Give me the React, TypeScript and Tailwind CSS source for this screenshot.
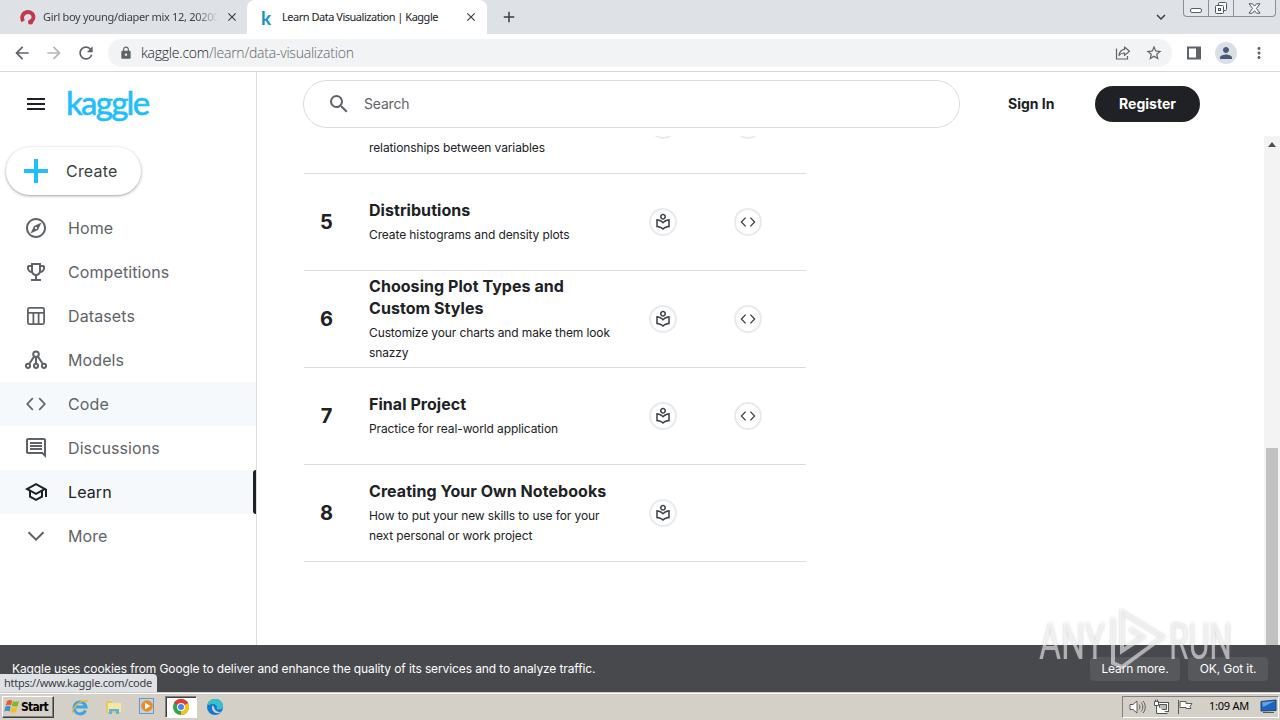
import type { ReactNode } from "react";
import clsx from "clsx";
import {
    MdAdd,
    MdArrowBack,
    MdArrowForward,
    MdClose,
    MdExpandMore,
    MdLock,
    MdMenu,
    MdMoreVert,
    MdOutlineEmojiEvents,
    MdOutlineExplore,
    MdOutlineInsertComment,
    MdOutlineLocalLibrary,
    MdOutlineSchool,
    MdPerson,
    MdRefresh,
    MdSearch,
    MdStarBorder,
} from "react-icons/md";

interface NavItemProps {
    icon: ReactNode;
    label: string;
    hovered?: boolean;
    active?: boolean;
}

interface LessonProps {
    number?: number;
    title?: string;
    description: string;
    hasExercise?: boolean;
    className?: string;
}

const CodeIcon = () => (
    <svg width="1em" height="1em" viewBox="0 0 24 24" fill="none" stroke="currentColor" strokeWidth="1.7">
        <path d="M8.800 6.200L3.200 12l5.600 5.800M15.200 6.200l5.600 5.800-5.600 5.800" />
    </svg>
)

const ChevronIcon = () => (
    <svg width="24" height="24" viewBox="0 0 24 24" fill="none" stroke="currentColor" strokeWidth="2">
        <path d="M4.500 8.300l7.500 7.400 7.500-7.400" />
    </svg>
)

const DatasetsIcon = () => (
    <svg width="24" height="24" viewBox="0 0 24 24" fill="none" stroke="currentColor" strokeWidth="1.8">
        <rect x="3.9" y="3.9" width="16.2" height="16.2" rx="1.5" />
        <path d="M4 8.9h16M9.400 9v11M14.600 9v11" />
    </svg>
)

const ModelsIcon = () => (
    <svg width="24" height="24" viewBox="0 0 24 24" fill="none" stroke="currentColor" strokeWidth="2">
        <circle cx="12" cy="6.200" r="2.800" />
        <circle cx="4" cy="17.800" r="2.100" />
        <circle cx="12" cy="17.800" r="2.100" />
        <circle cx="20" cy="17.800" r="2.100" />
        <path d="M12 9v6.500M10.300 8.400l-5 7.300M13.700 8.400l5 7.300" />
    </svg>
)

const ShareIcon = () => (
    <svg width="18" height="18" viewBox="0 0 18 18" fill="none" stroke="#5f6368" strokeWidth="1.2">
        <path d="M2.500 4.500v10.500h11v-3" />
        <path d="M10.500 3l5 4.200-5 4.200V9c-2.700-.2-4.300.8-5.500 2.500.3-3.300 2-5.700 5.500-6.100z" strokeLinejoin="round" />
    </svg>
)

const WindowButtons = () => (
    <div className="flex h-[17px] w-[93px] rounded-b-[4px] border border-t-0 border-[#8b8f98] bg-[#e3e6eb]">
        <div className="flex w-[25px] items-end justify-center border-r border-[#8b8f98] pb-[3px]">
            <div className="h-[5px] w-3 rounded-[2px] border border-[#5a5e66] bg-white"></div>
        </div>
        <div className="flex w-[25px] items-center justify-center border-r border-[#8b8f98]">
            <svg width="14" height="14" viewBox="0 0 14 14" fill="#fff" stroke="#50545c">
                <rect x="4.500" y="1.500" width="8" height="8" rx="1" />
                <rect x="1.500" y="4.500" width="8" height="8" rx="1" />
                <rect x="4.500" y="7.500" width="2" height="2" />
            </svg>
        </div>
        <div className="flex flex-1 items-center justify-center">
            <svg width="13" height="11" viewBox="0 0 13 11" fill="#fff" stroke="#50545c" strokeLinejoin="round">
                <path d="M1 .8h3.500l2 2.400 2-2.400H12L8.400 5.400 12 10.200H8.500l-2-2.500-2 2.500H1l3.600-4.800z" />
            </svg>
        </div>
    </div>
)

const TabStrip = () => (
    <div className="flex h-[34px] bg-[#dee1e6] text-[#3c4043]">
        <div className="flex w-[247px] items-center pl-5">
            <svg width="16" height="16" viewBox="0 0 16 16" fill="none">
                <path d="M3.200 12.200C.9 8.500 2.500 3.500 7.500 3c4.500-.3 6.700 3.500 5.700 6.500-.6 2-2 3-3.700 3.500" stroke="#c03a4c" strokeWidth="3.800" />
                <circle cx="10.500" cy="13" r="2.500" fill="#c03a4c" />
            </svg>
            <span className="ml-[7px] w-[175px] overflow-hidden whitespace-nowrap font-['Noto_Sans',sans-serif] text-[11px] tracking-[-0.32px] [mask-image:linear-gradient(to_right,black_87%,transparent)]">
                Girl boy young/diaper mix 12, 20200
            </span>
            <MdClose className="ml-[7px] text-[14px]" stroke="currentColor" />
        </div>
        <div className="flex w-[240px] items-center rounded-t-lg bg-white pl-[11px]">
            <span className="w-4 text-center font-['Lato',sans-serif] text-[19px] leading-none font-bold text-[#1593c4]">k</span>
            <span className="ml-2 w-[178px] whitespace-nowrap font-['Noto_Sans',sans-serif] text-[11px] tracking-[-0.48px] text-[#202124]">
                Learn Data Visualization | Kaggle
            </span>
            <MdClose className="ml-[4px] text-[14px]" stroke="currentColor" />
        </div>
        <MdAdd className="mt-2 ml-[13px] text-[18px]" />
        <MdExpandMore className="mt-[8px] ml-[634px] text-[18px]" />
        <div className="ml-[13px]">
            <WindowButtons />
        </div>
    </div>
)

const Toolbar = () => (
    <div className="flex h-[38px] items-center border-b border-[#d5d7da] bg-white text-[#5f6368]">
        <MdArrowBack className="ml-3 text-[20px]" />
        <MdArrowForward className="ml-3 text-[20px] text-[#b4b6b9]" />
        <MdRefresh className="ml-3 text-[20px]" />
        <div className="ml-[12px] flex h-7 w-[1064px] items-center rounded-full bg-[#f1f3f4] pl-[11px]">
            <MdLock className="text-[14px]" />
            <span className="ml-2 w-[973px] font-['Open_Sans',sans-serif] text-[14px] font-light tracking-[-0.22px] text-[#5f6368]">
                <span className="text-[#202124]">kaggle.com</span>/learn/data-visualization
            </span>
            <ShareIcon />
            <MdStarBorder className="ml-[13px] text-[18px]" />
        </div>
        <svg className="ml-[14px]" width="16" height="16" viewBox="0 0 16 16">
            <path d="M1 1.500h14v13H1zM3 3.500v9h7v-9z" fill="#5f6368" fillRule="evenodd" />
        </svg>
        <div className="ml-[13px] flex size-[22px] items-center justify-center rounded-full bg-[#dadfe6]">
            <MdPerson className="text-[18px] text-[#4a5a78]" />
        </div>
        <MdMoreVert className="ml-[13px] text-[18px]" />
    </div>
)

const NavItem = ({ icon, label, hovered, active }: NavItemProps) => (
    <li
        className={clsx(
            "flex h-11 items-center justify-between pl-6",
            (hovered || active) && "bg-[#f5f9fc]",
            active ? "text-[#202124]" : "text-[#5f6368]",
        )}
    >
        <div className="flex items-center gap-5 text-2xl">
            {icon}
            <span className="text-base tracking-[0.1px]">{label}</span>
        </div>
        {active && <div className="h-11 w-[3px] rounded-l-sm bg-[#202124]"></div>}
    </li>
)

const Sidebar = () => (
    <aside className="w-[257px] border-r border-[#dadce0]">
        <div className="flex h-16 items-center pl-6">
            <MdMenu className="text-2xl text-[#202124]" />
            <span className="mt-[-3px] ml-[18px] font-['Lato',sans-serif] text-[33px] leading-none tracking-[-1.7px] text-[#20beff] [-webkit-text-stroke:0.6px_#20beff]">kaggle</span>
        </div>
        <button className="mt-[11px] ml-1.5 flex h-12 w-[135px] items-center rounded-full bg-white pl-[18px] shadow-[0_1px_2px_0_rgba(60,64,67,0.3),0_1px_3px_1px_rgba(60,64,67,0.15)]">
            <svg width="24" height="24" viewBox="0 0 24 24" fill="#20beff">
                <path d="M10 0h4v10h10v4H14v10h-4V14H0v-4h10z" />
            </svg>
            <span className="ml-[18px] text-base tracking-[0.2px] text-[#3c4043]">Create</span>
        </button>
        <ul className="mt-[11px]">
            <NavItem icon={<MdOutlineExplore />} label="Home" />
            <NavItem icon={<MdOutlineEmojiEvents />} label="Competitions" />
            <NavItem icon={<DatasetsIcon />} label="Datasets" />
            <NavItem icon={<ModelsIcon />} label="Models" />
            <NavItem icon={<CodeIcon />} label="Code" hovered />
            <NavItem icon={<MdOutlineInsertComment />} label="Discussions" />
            <NavItem icon={<MdOutlineSchool />} label="Learn" active />
            <NavItem icon={<ChevronIcon />} label="More" />
        </ul>
    </aside>
)

const Header = () => (
    <header className="flex h-16 items-center pl-[46px] text-sm">
        <div className="flex h-12 w-[657px] items-center rounded-full border border-[#dadce0] pl-[23px] text-[#5f6368]">
            <MdSearch className="text-2xl" />
            <span className="ml-[13px] tracking-[-0.2px]">Search</span>
        </div>
        <span className="ml-12 w-[87px] font-bold text-[#202124]">Sign In</span>
        <button className="h-9 w-[105px] rounded-full bg-[#202124] font-bold text-white">Register</button>
    </header>
)

const RoundButton = ({ children }: { children: ReactNode }) => (
    <div className="flex size-7 items-center justify-center rounded-full border-2 border-[#e8eaed] text-[18px] text-[#3c4043]">
        {children}
    </div>
)

const Lesson = ({ number, title, description, hasExercise = true, className }: LessonProps) => (
    <div className={clsx("flex h-[97px] w-[502px] shrink-0 items-center border-b border-[#dadce0] text-[#202124]", className)}>
        <span className="w-[45px] text-center text-xl font-bold">{number}</span>
        <div className="ml-5 w-[250px] whitespace-pre-line">
            <h3 className="mb-1 min-h-[22px] text-base leading-[22px] font-bold tracking-[0.05px]">{title}</h3>
            <p className="text-xs leading-5 tracking-[-0.11px]">{description}</p>
        </div>
        <div className="ml-[30px] flex gap-[57px]">
            <RoundButton><MdOutlineLocalLibrary /></RoundButton>
            {hasExercise && <RoundButton><CodeIcon /></RoundButton>}
        </div>
    </div>
)

const Scrollbar = () => (
    <div className="flex w-4 flex-col items-center justify-between bg-[#f3f3f3]">
        <div className="mt-[6px] border-x-4 border-b-[5px] border-x-transparent border-b-[#505050]"></div>
        <div className="h-[197px] w-3 bg-[#c1c1c1]"></div>
    </div>
)

const CookieBar = () => (
    <div className="relative flex h-[47px] items-center bg-[#48494d] pl-3 text-xs text-white">
        <span className="w-[1078px] tracking-[-0.11px]">
            Kaggle uses cookies from Google to deliver and enhance the quality of its services and to analyze traffic.
        </span>
        <button className="h-6 w-[90px] rounded bg-[#57585c] tracking-[-0.1px]">Learn more.</button>
        <button className="ml-2 h-6 w-20 rounded bg-[#57585c] tracking-[-0.1px]">OK, Got it.</button>
        <div className="absolute bottom-0 left-0 h-[18px] w-[157px] rounded-tr bg-[#dee1e6] pl-1 font-['Noto_Sans',sans-serif] text-[11px] leading-[18px] tracking-[-0.27px] text-[#3c4043]">
            https://www.kaggle.com/code
        </div>
    </div>
)

const Watermark = () => (
    <svg className="absolute top-[600px] left-[1030px]" width="210" height="80" viewBox="0 0 210 80">
        <g
            fontFamily="Roboto, sans-serif"
            fontSize="50"
            fill="#fff"
            fillOpacity="0.55"
            className="drop-shadow-[0_0_1.500px_rgba(110,110,110,0.6)]"
        >
            <text x="9" y="59" textLength="66" lengthAdjust="spacingAndGlyphs">ANY</text>
            <text x="139" y="59" textLength="63" lengthAdjust="spacingAndGlyphs">RUN</text>
            <g fill="none" stroke="#fff" strokeOpacity="0.55" strokeWidth="4">
                <path d="M83 18v45l9 4 41-30L92 12v39l21-14-13-8" />
            </g>
        </g>
    </svg>
)

const StartFlag = () => (
    <svg width="17" height="15" viewBox="0 0 17 15">
        <path d="M3 2c2-1.500 3.500-1.200 5.200-.2L7 6.500c-2-1-3.500-1-5.200 0z" fill="#ea5a2a" />
        <path d="M9 2c2 1 4 .9 6 0l-1.300 5C12 8 9.700 7.600 7.800 6.800z" fill="#7db928" />
        <path d="M1.500 7.500c1.800-1.300 3.500-1 5.200 0L5.500 12.500c-1.800-1-3.500-1-5.300.2z" fill="#3d8fd8" />
        <path d="M7.600 8c2 1 4 .8 5.800-.2L12 13c-2 1-4 .9-5.800-.2z" fill="#f7bd25" />
    </svg>
)

const QuickLaunch = () => (
    <div className="flex items-center">
        <svg className="ml-[17px]" width="18" height="18" viewBox="0 0 18 18" fill="none">
            <path d="M14.500 12.500A6 6 0 1 1 15 9H5" stroke="#3da5e0" strokeWidth="3" />
            <path d="M1 15C3 6 12 1 17 3.500" stroke="#e8b83a" strokeWidth="1.300" />
        </svg>
        <svg className="ml-4" width="18" height="18" viewBox="0 0 18 18">
            <path d="M1 3h6l1 2h8v10H1z" fill="#e6c860" />
            <path d="M3 5h13v9H3z" fill="#f8e7a0" />
            <path d="M4 16v-5h10v5h-3v-2.500H7V16z" fill="#5fb4dc" />
        </svg>
        <svg className="ml-4" width="17" height="17" viewBox="0 0 17 17">
            <rect x=".5" y=".5" width="14" height="15" fill="#b9d4ec" stroke="#6f97bd" />
            <circle cx="8" cy="8" r="5.800" fill="#f28a1c" />
            <path d="M6 4.800v6.400L11.300 8z" fill="#fff" />
        </svg>
        <div className="ml-[9px] flex h-[22px] w-[32px] items-center justify-center border border-[#808080] border-r-white border-b-white bg-white shadow-[inset_1px_1px_0_#404040]">
            <svg width="16" height="16" viewBox="0 0 16 16">
                <circle cx="8" cy="8" r="8" fill="#34a350" />
                <path d="M8 8L1.070 4A8 8 0 0 1 14.930 4z" fill="#e33b2e" />
                <path d="M8 8L14.930 4A8 8 0 0 1 8 16z" fill="#fbc116" />
                <path d="M8 4h6.930L8 8z" fill="#e33b2e" />
                <circle cx="8" cy="8" r="4" fill="#fff" />
                <circle cx="8" cy="8" r="3" fill="#4285f4" />
            </svg>
        </div>
        <svg className="ml-[9px]" width="18" height="18" viewBox="0 0 18 18">
            <circle cx="9" cy="9" r="8" fill="#1479cc" />
            <path d="M1 8C2 3 5.500 1 9 1c5 0 8 3.500 8 7 0 2.500-2 3.500-4 3.500-2 0-2.700-.6-2.200-1.500C11.500 8 9.500 6 7 6 4 6 2 7 1 8z" fill="#35c1c8" />
            <path d="M7 7c-2 2-1 7 3 8 2 .4 4 0 5.500-1.300-3 .8-6.500-.7-7-3.200z" fill="#d4d0c8" />
        </svg>
    </div>
)

const Tray = () => (
    <div className="flex h-[22px] w-[157px] items-center border border-[#808080] border-r-white border-b-white pl-[6px]">
        <svg width="17" height="16" viewBox="0 0 17 16" fill="#fff" stroke="#5c5c5c">
            <path d="M1 5.500h3L8 2v12l-4-3.500H1z" />
            <path d="M10 5.500c1.200 1.500 1.200 3.500 0 5M12 3.500c2.400 2.500 2.400 6.500 0 9M14 2c3 3.500 3 8.500 0 12" fill="none" />
        </svg>
        <svg className="ml-[7px]" width="17" height="16" viewBox="0 0 17 16" fill="#fff" stroke="#555">
            <rect x="4.500" y="3.500" width="11" height="9" />
            <path d="M6.500 5.500h7v5h-7z" fill="#bbb" />
            <path d="M1.500 2.500h4v4h-4zM3.500 6.500v8h11M2.500.5v2M4.500.5v2" />
        </svg>
        <svg className="ml-[7px]" width="17" height="16" viewBox="0 0 17 16" fill="#fff" stroke="#5c5c5c">
            <path d="M1.500 1v14M3 2.500h6v2h6l-2 3 1 2H9v-1H3z" />
        </svg>
        <span className="ml-[15px] w-[42px] whitespace-nowrap font-['Noto_Sans',sans-serif] text-[11px] tracking-[-0.25px] text-black">1:09 AM</span>
        <svg className="ml-[9px]" width="17" height="15" viewBox="0 0 17 15">
            <path d="M1 2.500L16 1v10.500L1 12z" fill="#1d64c0" stroke="#24456f" />
            <path d="M2 3.200L15 2 3 8z" fill="#5fa4e8" />
            <path d="M3 13.500h11" stroke="#555" />
        </svg>
    </div>
)

const Taskbar = () => (
    <div className="flex h-7 items-center justify-between border-t border-[#d4d0c8] bg-[#d4d0c8] pr-px pl-0.5 shadow-[inset_0_1px_0_#fff]">
        <div className="flex items-center">
            <button className="flex h-[22px] w-[52px] items-center border border-white border-r-[#404040] border-b-[#404040] pl-px shadow-[inset_-1px_-1px_0_#808080]">
                <StartFlag />
                <span className="mt-px font-['DejaVu_Sans_Condensed','DejaVu_Sans',sans-serif] text-[12px] font-bold tracking-[-0.75px] text-black">Start</span>
            </button>
            <QuickLaunch />
        </div>
        <Tray />
    </div>
)

const App = () => {
    return (
        <div className="relative flex h-[720px] w-[1280px] flex-col overflow-hidden bg-white font-['Inter',sans-serif]">
            <TabStrip />
            <Toolbar />

            <div className="flex h-[573px]">
                <Sidebar />
                <main className="flex flex-1 flex-col">
                    <Header />
                    <div className="flex min-h-0 flex-1 justify-between">
                        <div className="flex flex-col overflow-hidden pl-[47px]">
                            <Lesson className="-mt-[59px]" description={"\nrelationships between variables"} />
                            <Lesson number={5} title="Distributions" description="Create histograms and density plots" />
                            <Lesson
                                number={6}
                                title={"Choosing Plot Types and\nCustom Styles"}
                                description={"Customize your charts and make them look\nsnazzy"}
                            />
                            <Lesson number={7} title="Final Project" description="Practice for real-world application" />
                            <Lesson
                                number={8}
                                title="Creating Your Own Notebooks"
                                description={"How to put your new skills to use for your\nnext personal or work project"}
                                hasExercise={false}
                            />
                        </div>
                        <Scrollbar />
                    </div>
                </main>
            </div>

            <CookieBar />
            <Taskbar />
            <Watermark />
        </div>
    );
}

export default App;
